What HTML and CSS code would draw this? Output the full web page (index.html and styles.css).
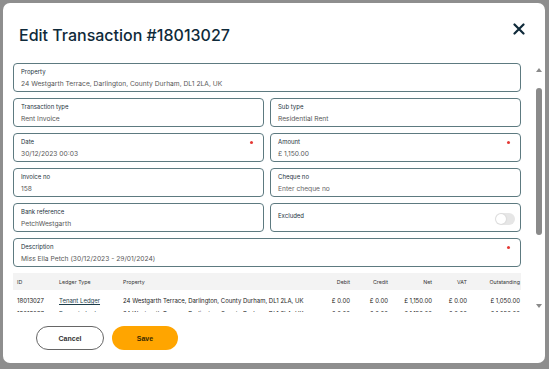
FILE: index.html
```html
<!DOCTYPE html>
<html lang="en">
<head>
    <meta charset="UTF-8">
    <title>Edit Transaction</title>
    <link rel="stylesheet" href="styles.css">
</head>
<body>
    <div class="modal">
        <div class="modal-header">
            <h1>Edit Transaction #18013027</h1>
            <button class="close-btn" aria-label="Close">
                <svg width="12" height="12" viewBox="0 0 12 12"><path d="M1.5 1.5 L10.5 10.5 M10.5 1.5 L1.5 10.5" stroke="#0f2a3a" stroke-width="2.2" stroke-linecap="round"/></svg>
            </button>
        </div>

        <div class="modal-body">
            <div class="scroll-content">
                <div class="form-grid">
                    <div class="field full">
                        <label>Property</label>
                        <div class="value">24 Westgarth Terrace, Darlington, County Durham, DL1 2LA, UK</div>
                    </div>
                    <div class="field">
                        <label>Transaction type</label>
                        <div class="value">Rent Invoice</div>
                    </div>
                    <div class="field">
                        <label>Sub type</label>
                        <div class="value">Residential Rent</div>
                    </div>
                    <div class="field">
                        <label>Date</label>
                        <span class="required"></span>
                        <div class="value">30/12/2023 00:03</div>
                    </div>
                    <div class="field">
                        <label>Amount</label>
                        <span class="required"></span>
                        <div class="value">£ 1,150.00</div>
                    </div>
                    <div class="field">
                        <label>Invoice no</label>
                        <div class="value">158</div>
                    </div>
                    <div class="field">
                        <label>Cheque no</label>
                        <div class="value placeholder">Enter cheque no</div>
                    </div>
                    <div class="field">
                        <label>Bank reference</label>
                        <div class="value">PetchWestgarth</div>
                    </div>
                    <div class="field toggle-field">
                        <label>Excluded</label>
                        <span class="toggle"><span class="knob"></span></span>
                    </div>
                    <div class="field full">
                        <label>Description</label>
                        <span class="required"></span>
                        <div class="value">Miss Ella Petch (30/12/2023 - 29/01/2024)</div>
                    </div>
                </div>

                <table class="ledger-table">
                    <thead>
                        <tr>
                            <th class="col-id">ID</th>
                            <th class="col-type">Ledger Type</th>
                            <th>Property</th>
                            <th class="num col-debit">Debit</th>
                            <th class="num col-credit">Credit</th>
                            <th class="num col-net">Net</th>
                            <th class="num col-vat">VAT</th>
                            <th class="num col-out">Outstanding</th>
                        </tr>
                    </thead>
                    <tbody>
                        <tr>
                            <td>18013027</td>
                            <td><a href="#">Tenant Ledger</a></td>
                            <td>24 Westgarth Terrace, Darlington, County Durham, DL1 2LA, UK</td>
                            <td class="num">£ 0.00</td>
                            <td class="num">£ 0.00</td>
                            <td class="num">£ 1,150.00</td>
                            <td class="num">£ 0.00</td>
                            <td class="num">£ 1,050.00</td>
                        </tr>
                        <tr>
                            <td>18013027</td>
                            <td><a href="#">Property Ledger</a></td>
                            <td>24 Westgarth Terrace, Darlington, County Durham, DL1 2LA, UK</td>
                            <td class="num">£ 0.00</td>
                            <td class="num">£ 0.00</td>
                            <td class="num">£ 1,150.00</td>
                            <td class="num">£ 0.00</td>
                            <td class="num">£ 1,050.00</td>
                        </tr>
                    </tbody>
                </table>
            </div>

            <div class="scrollbar">
                <span class="arrow up"></span>
                <div class="track"><div class="thumb"></div></div>
                <span class="arrow down"></span>
            </div>
        </div>

        <div class="modal-footer">
            <button class="btn btn-outline">Cancel</button>
            <button class="btn btn-primary">Save</button>
        </div>
    </div>
</body>
</html>
```

FILE: styles.css
```css
* {
    margin: 0;
    padding: 0;
    box-sizing: border-box;
}

body {
    font-family: Inter, "Noto Sans", sans-serif;
    background: #8e8e8e;
    width: 549px;
    height: 369px;
    overflow: hidden;
    padding: 3px 4px 5px 3px;
    color: #0f2a3a;
}

.modal {
    background: white;
    border-radius: 7px;
    height: 360px;
    display: flex;
    flex-direction: column;
    overflow: hidden;
}

.modal-header {
    height: 60px;
    display: flex;
    justify-content: space-between;
    align-items: flex-start;
    padding: 21px 19px 0 16px;
}

.modal-header h1 {
    font-size: 16px;
    font-weight: 500;
    color: #0f2a3a;
    line-height: 22px;
}

.close-btn {
    background: none;
    border: none;
    margin-top: -2px;
    cursor: pointer;
    width: 14px;
    height: 14px;
    display: flex;
    align-items: center;
    justify-content: center;
}

/* Body with the scrolling area */
.modal-body {
    height: 249px;
    display: flex;
}

.scroll-content {
    width: 518px;
    padding-left: 10px;
    overflow: hidden;
}

.form-grid {
    display: grid;
    grid-template-columns: 1fr 1fr;
    gap: 6px;
}

.field {
    position: relative;
    height: 29px;
    border: 1px solid #5d7a80;
    border-radius: 4px;
    padding: 3px 7px 0;
}

.field.full {
    grid-column: span 2;
}

.field label {
    display: block;
    font-size: 6px;
    line-height: 9px;
    color: #1d3440;
}

.field .value {
    font-size: 6.7px;
    line-height: 10px;
    margin-top: 3px;
    color: #585858;
}

.field .value.placeholder {
    color: #666;
}

.required {
    position: absolute;
    top: 7px;
    right: 10px;
    width: 3px;
    height: 3px;
    border-radius: 50%;
    background: #e53935;
}

.toggle-field {
    display: flex;
    justify-content: space-between;
    align-items: center;
    padding-top: 0;
}

.toggle-field label {
    margin-top: -5px;
}

.toggle {
    width: 20px;
    height: 12px;
    border-radius: 6px;
    background: #e6e6e6;
    margin-right: -2px;
    margin-top: 2px;
    padding: 1px;
}

.toggle .knob {
    display: block;
    width: 10px;
    height: 10px;
    border-radius: 50%;
    background: white;
    box-shadow: 0 0 2px rgba(0,0,0,0.15);
}

/* Ledger table */
.ledger-table {
    width: 508px;
    margin-top: 6px;
    border-collapse: collapse;
    table-layout: fixed;
    font-size: 6px;
    color: #222;
}

.ledger-table th {
    background: #f3f3f3;
    font-weight: 400;
    font-size: 5.3px;
    text-align: left;
    height: 17px;
    padding: 0 4px;
    color: #333;
}

.ledger-table td {
    height: 13px;
    line-height: 13px;
    padding: 0 4px;
    white-space: nowrap;
    overflow: hidden;
}

.ledger-table tbody tr:first-child td {
    height: 17px;
    padding-top: 4px;
}

.ledger-table .col-id {
    width: 42px;
}

.ledger-table .col-type {
    width: 64px;
}

.ledger-table .col-debit {
    width: 48px;
}

.ledger-table .col-credit {
    width: 38px;
}

.ledger-table .col-net {
    width: 44px;
}

.ledger-table .col-vat {
    width: 35px;
}

.ledger-table .col-out {
    width: 50px;
}

.ledger-table .num {
    text-align: right;
}

.ledger-table th.col-out,
.ledger-table td:last-child {
    padding-right: 1px;
}

.ledger-table a {
    color: #1d3d4a;
    text-decoration: underline;
}

/* Fake scrollbar */
.scrollbar {
    width: 13px;
    margin-left: 11px;
    display: flex;
    flex-direction: column;
    align-items: center;
    padding: 5px 0 4px;
}

.arrow {
    width: 0;
    height: 0;
    border-left: 3px solid transparent;
    border-right: 3px solid transparent;
}

.arrow.up {
    border-bottom: 4px solid #8a8a8a;
}

.arrow.down {
    border-top: 4px solid #8a8a8a;
}

.track {
    flex: 1;
    width: 6px;
    padding-top: 16px;
}

.thumb {
    height: 147px;
    width: 6px;
    border-radius: 3px;
    background: #8a8a8a;
}

/* Footer */
.modal-footer {
    display: flex;
    gap: 8px;
    padding: 14px 0 0 33px;
}

.btn {
    height: 24px;
    width: 68px;
    border-radius: 12px;
    font-family: "Liberation Sans", Arial, sans-serif;
    font-size: 7px;
    font-weight: bold;
    cursor: pointer;
}

.btn-outline {
    background: white;
    border: 1px solid #666;
    color: #333;
}

.btn-primary {
    width: 66px;
    background: #ffa500;
    border: none;
    color: #3a2a00;
}
```
